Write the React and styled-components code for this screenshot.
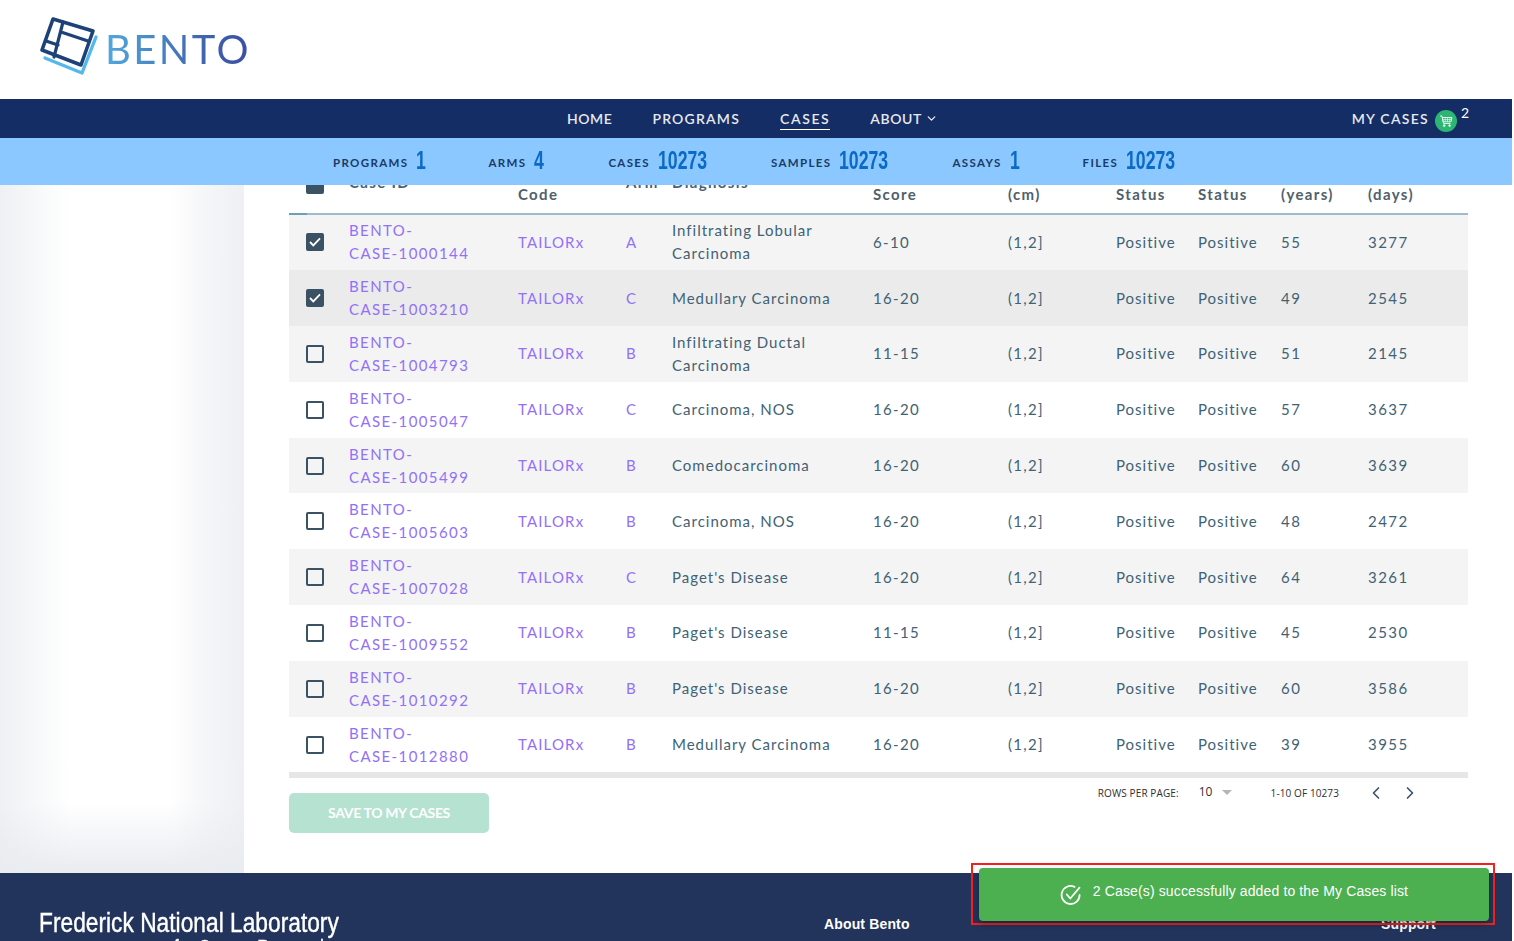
import React from 'react';
import styled, { createGlobalStyle } from 'styled-components';
import { ChevronDown, ChevronLeft, ChevronRight } from 'lucide-react';

const CASES = [
  ['1000144', 'A', 'Infiltrating Lobular Carcinoma', '6-10', '55', '3277', true],
  ['1003210', 'C', 'Medullary Carcinoma', '16-20', '49', '2545', true],
  ['1004793', 'B', 'Infiltrating Ductal Carcinoma', '11-15', '51', '2145', false],
  ['1005047', 'C', 'Carcinoma, NOS', '16-20', '57', '3637', false],
  ['1005499', 'B', 'Comedocarcinoma', '16-20', '60', '3639', false],
  ['1005603', 'B', 'Carcinoma, NOS', '16-20', '48', '2472', false],
  ['1007028', 'C', "Paget's Disease", '16-20', '64', '3261', false],
  ['1009552', 'B', "Paget's Disease", '11-15', '45', '2530', false],
  ['1010292', 'B', "Paget's Disease", '16-20', '60', '3586', false],
  ['1012880', 'B', 'Medullary Carcinoma', '16-20', '39', '3955', false],
];

const STATS = [
  ['PROGRAMS', '1', 8],
  ['ARMS', '4', 10],
  ['CASES', '10273', 49],
  ['SAMPLES', '10273', 49],
  ['ASSAYS', '1', 9],
  ['FILES', '10273', 49],
];

const COLUMNS = '60px 169px 108px 46px 201px 135px 108px 82px 83px 87px 100px';

const GlobalStyle = createGlobalStyle`
  html, body {
    margin: 0;
    height: 941px;
    overflow: hidden;
    background: #fff;
  }
  body {
    font-family: "Lato", "Liberation Sans", sans-serif;
  }
`;

const Page = styled.div`
  position: relative;
  width: 1512px;
  height: 941px;
  overflow: hidden;
`;

const Header = styled.header`
  height: 99px;
  box-sizing: border-box;
  display: flex;
  align-items: flex-start;
  padding: 15px 0 0 39px;
  gap: 6px;
  background: #fff;
`;

const Wordmark = styled.span`
  font-family: "Lato", sans-serif;
  font-weight: 400;
  font-size: 40px;
  letter-spacing: 2.4px;
  line-height: 1;
  margin-top: 14px;
  background: linear-gradient(90deg, #52a8dc 0%, #3f63ad 70%, #3b4ea3 100%);
  -webkit-background-clip: text;
  background-clip: text;
  color: transparent;
`;

const Nav = styled.nav`
  position: relative;
  z-index: 3;
  height: 39px;
  background: #142d64;
  display: flex;
  align-items: center;
  padding-left: 567px;
`;

const NavLink = styled.a`
  font-family: "Lato", sans-serif;
  font-size: 14px;
  font-weight: 600;
  letter-spacing: ${(p) => p.$spacing}px;
  color: #e6e9ef;
  margin-right: 40px;
  padding: 3px 0 2px;
  display: flex;
  align-items: center;
  gap: 3px;
  border-bottom: 1px solid ${(p) => (p.$active ? '#fff' : 'transparent')};
`;

const MyCases = styled.div`
  margin-left: auto;
  margin-right: 43px;
  display: flex;
  align-items: center;
  font-size: 14px;
  font-weight: 600;
  letter-spacing: 1.25px;
  color: #e6e9ef;
`;

const CartBadge = styled.span`
  width: 22px;
  height: 22px;
  border-radius: 50%;
  background: #2bb673;
  margin-left: 6px;
  display: flex;
  align-items: center;
  justify-content: center;
  position: relative;
  top: 2px;
`;

const CartCount = styled.sup`
  font-size: 14px;
  font-weight: 400;
  letter-spacing: 0;
  line-height: 1;
  margin-left: 4px;
  position: relative;
  top: -6px;
  color: #fff;
`;

const StatsBar = styled.div`
  position: relative;
  z-index: 2;
  height: 47px;
  box-sizing: border-box;
  padding: 0 0 3px 333px;
  background: #8bc8ff;
  display: flex;
  align-items: center;
  gap: 64px;
`;

const Stat = styled.div`
  display: flex;
  align-items: center;
`;

const StatLabel = styled.span`
  font-size: 11.5px;
  font-weight: 700;
  letter-spacing: 1.35px;
  color: #1c3a66;
  margin: 4px 8px 0 0;
`;

const StatValue = styled.span`
  display: inline-block;
  width: ${(p) => p.$width}px;
  font-family: "Liberation Sans", sans-serif;
  font-size: 26px;
  font-weight: 700;
  line-height: 30px;
  color: #0b69c7;
  transform: scaleX(0.68);
  transform-origin: left;
`;

const Body = styled.div`
  display: flex;
  height: 688px;
`;

const Sidebar = styled.aside`
  width: 244px;
  flex: none;
  background:
    linear-gradient(0deg, #e9ecf0 0, rgba(255, 255, 255, 0) 70px),
    linear-gradient(90deg, #eef0f3 0, #f9fafb 45px, #fff 70px, #fff 170px, #f5f6f8 205px, #eef0f3 100%);
`;

const Main = styled.main`
  flex: 1;
  padding-left: 45px;
  padding-right: 44px;
`;

const Table = styled.div`
  margin-top: -31.5px;
`;

const HeadRow = styled.div`
  position: relative;
  display: grid;
  grid-template-columns: ${COLUMNS};
  height: 61px;
  padding-bottom: 1px;
  align-items: center;
  border-bottom: 2px solid #9dbccb;
  box-sizing: border-box;

  &::after {
    content: "";
    position: absolute;
    left: 0;
    bottom: -2px;
    width: 18px;
    height: 2px;
    background: #6f9dbc;
  }
`;

const HeadCell = styled.div`
  font-size: 15px;
  font-weight: 700;
  letter-spacing: 1.35px;
  line-height: 23px;
  color: #4f606d;
`;

const Row = styled.div`
  display: grid;
  grid-template-columns: ${COLUMNS};
  height: 55.8px;
  align-items: center;
  background: ${(p) => p.$bg};
`;

const Cell = styled.div`
  font-size: 15px;
  letter-spacing: ${(p) => p.$spacing || 1}px;
  line-height: 23px;
  color: ${(p) => (p.$link ? '#9271f6' : '#3f6275')};
`;

const CheckCell = styled.div`
  display: flex;
  justify-content: center;
  padding-right: 8px;
  margin-top: ${(p) => (p.$head ? '4px' : '0')};
`;

const Check = styled.span`
  width: 18px;
  height: 18px;
  box-sizing: border-box;
  border-radius: 2px;
  border: 2px solid #3b5164;
  background: ${(p) => (p.$on ? '#3b5164' : 'transparent')};
  display: flex;
  align-items: center;
  justify-content: center;
`;

const TableEnd = styled.div`
  height: 5.5px;
  background: #e6e6e6;
`;

const Controls = styled.div`
  display: flex;
  justify-content: space-between;
  align-items: flex-start;
`;

const SaveButton = styled.button`
  margin-top: 15px;
  width: 200px;
  height: 40px;
  border: 0;
  border-radius: 5px;
  background: #b5e2d1;
  color: #fff;
  font-family: "Lato", sans-serif;
  font-size: 14px;
  font-weight: 700;
  letter-spacing: -0.35px;
`;

const Pager = styled.div`
  display: flex;
  align-items: center;
  height: 28px;
  margin-top: 1px;
  padding-right: 48px;
  font-family: "Open Sans", sans-serif;
  letter-spacing: 0.1px;
  color: #2f2f2f;
  font-size: 10px;
`;

const PagerCount = styled.span`
  margin-left: ${(p) => p.$gap}px;
`;

const PagerValue = styled.span`
  font-size: 12px;
  margin-left: 20px;
  position: relative;
  top: -1px;
`;

const Caret = styled.span`
  width: 0;
  height: 0;
  margin-left: 9px;
  border-left: 5px solid transparent;
  border-right: 5px solid transparent;
  border-top: 5px solid #b5b5b5;
`;

const PagerIcon = styled.span`
  display: flex;
  color: #3c5364;
  margin-left: ${(p) => p.$gap}px;
`;

const Footer = styled.footer`
  height: 68px;
  background: #22345c;
  padding: 36px 0 0 39px;
  display: flex;
  box-sizing: border-box;
  color: #fff;
`;

const FooterBrand = styled.div`
  width: 785px;
  flex: none;
  font-family: "Liberation Sans", sans-serif;
  font-size: 27px;
  line-height: 28px;
  -webkit-text-stroke: 0.4px #fff;
  transform: scaleX(0.843);
  transform-origin: left top;
  white-space: nowrap;
`;

const BrandSub = styled.div`
  padding-left: 160px;
  font-size: 20px;
  line-height: 20px;
`;

const FooterHead = styled.div`
  font-family: "Liberation Sans", sans-serif;
  font-size: 14px;
  font-weight: 700;
  letter-spacing: 0.15px;
  padding-top: 7px;
  width: ${(p) => p.$width}px;
  flex: none;
`;

const Toast = styled.div`
  position: absolute;
  left: 979px;
  top: 868px;
  width: 510px;
  height: 53px;
  background: #4caf50;
  border-radius: 4px;
  box-shadow: 0 3px 6px rgba(0, 0, 0, 0.3);
  display: flex;
  align-items: center;
  justify-content: center;
  gap: 11px;
  color: #fff;
  font-family: "Liberation Sans", sans-serif;
  font-size: 14px;
  letter-spacing: 0.13px;
  box-sizing: border-box;
`;

const ToastText = styled.span`
  margin-bottom: 8px;
`;

const Annotation = styled.div`
  position: absolute;
  left: 971px;
  top: 863px;
  width: 524px;
  height: 62px;
  box-sizing: border-box;
  border: 2px solid #f3211b;
`;

const BentoLogo = () => (
  <svg width="60" height="62" viewBox="0 0 60 62" fill="none" strokeLinejoin="round" strokeLinecap="round">
    <path d="M6 43 L43 58 L57 22" stroke="#54b9ea" strokeWidth="3.4" />
    <path d="M14 4 L54 16 L42 50 L3 35 Z" stroke="#1d4277" strokeWidth="3.6" />
    <path d="M24 7 L15 42 M22 17 L49 26 M7 26 L19 30" stroke="#1d4277" strokeWidth="3.2" />
  </svg>
);

const CartIcon = () => (
  <svg width="14" height="14" viewBox="0 0 14 14" fill="none" stroke="#dff5ea" strokeWidth="1">
    <path d="M1 2 L3 2 L4.5 9.5 L11.5 9.5" />
    <path d="M3.2 3.5 L13 3.5 L12 7.8 L4.2 7.8 Z" />
    <path d="M6 3.5 L6.4 7.8 M8.5 3.5 L8.5 7.8 M11 3.5 L10.6 7.8 M3.7 5.6 L12.5 5.6" strokeWidth="0.7" />
    <circle cx="5.2" cy="11.6" r="0.9" fill="#dff5ea" />
    <circle cx="10.6" cy="11.6" r="0.9" fill="#dff5ea" />
  </svg>
);

const CheckMark = () => (
  <svg width="12" height="10" viewBox="0 0 12 10" fill="none">
    <path d="M1 5 L4.3 8.4 L11 1.4" stroke="#fff" strokeWidth="1.8" />
  </svg>
);

const ToastIcon = () => (
  <svg width="22" height="22" viewBox="0 0 22 22" fill="none" stroke="#fff" strokeWidth="1.8" strokeLinecap="round" strokeLinejoin="round">
    <path d="M19.6 11 A9 9 0 1 1 14.5 2.9" />
    <path d="M6.8 10.5 L10.3 14.5 L19.5 3.6" />
  </svg>
);

const HEADS = [
  'Case ID',
  <>Program<br />Code</>,
  'Arm',
  'Diagnosis',
  <>Recurrence<br />Score</>,
  <>Tumor Size<br />(cm)</>,
  <>ER<br />Status</>,
  <>PR<br />Status</>,
  <>Age<br />(years)</>,
  <>Survival<br />(days)</>,
];

const rowColor = (index) => {
  if (index === 1) return '#ebebeb';
  return index % 2 === 0 ? '#f4f4f4' : '#fff';
};

const App = () => (
  <Page>
    <GlobalStyle />
    <Header>
      <BentoLogo />
      <Wordmark>BENTO</Wordmark>
    </Header>
    <Nav>
      <NavLink $spacing={0.55}>HOME</NavLink>
      <NavLink $spacing={1.2}>PROGRAMS</NavLink>
      <NavLink $spacing={1.6} $active>CASES</NavLink>
      <NavLink $spacing={0.6}>ABOUT <ChevronDown size={13} strokeWidth={2.5} /></NavLink>
      <MyCases>
        MY CASES
        <CartBadge><CartIcon /></CartBadge>
        <CartCount>2</CartCount>
      </MyCases>
    </Nav>
    <StatsBar>
      {STATS.map(([label, value, width]) => (
        <Stat key={label}>
          <StatLabel>{label}</StatLabel>
          <StatValue $width={width}>{value}</StatValue>
        </Stat>
      ))}
    </StatsBar>
    <Body>
      <Sidebar />
      <Main>
        <Table>
          <HeadRow>
            <CheckCell $head><Check $on /></CheckCell>
            {HEADS.map((head, index) => (
              <HeadCell key={index}>{head}</HeadCell>
            ))}
          </HeadRow>
          {CASES.map(([id, arm, diagnosis, score, age, days, checked], index) => (
            <Row key={id} $bg={rowColor(index)}>
              <CheckCell><Check $on={checked}>{checked && <CheckMark />}</Check></CheckCell>
              <Cell $link $spacing={1.4}>BENTO-<br />CASE-{id}</Cell>
              <Cell $link $spacing={1.15}>TAILORx</Cell>
              <Cell $link>{arm}</Cell>
              <Cell>{diagnosis}</Cell>
              <Cell $spacing={1.35}>{score}</Cell>
              <Cell $spacing={1.3}>(1,2]</Cell>
              <Cell>Positive</Cell>
              <Cell>Positive</Cell>
              <Cell $spacing={1.45}>{age}</Cell>
              <Cell $spacing={1.45}>{days}</Cell>
            </Row>
          ))}
          <TableEnd />
        </Table>
        <Controls>
          <SaveButton>SAVE TO MY CASES</SaveButton>
          <Pager>
            ROWS PER PAGE:
            <PagerValue>10</PagerValue>
            <Caret />
            <PagerCount $gap={39}>1-10 OF 10273</PagerCount>
            <PagerIcon $gap={27}><ChevronLeft size={20} /></PagerIcon>
            <PagerIcon $gap={14}><ChevronRight size={20} /></PagerIcon>
          </Pager>
        </Controls>
      </Main>
    </Body>
    <Footer>
      <FooterBrand>
        Frederick National Laboratory
        <BrandSub>for Cancer Research</BrandSub>
      </FooterBrand>
      <FooterHead $width={557}>About Bento</FooterHead>
      <FooterHead $width={100}>Support</FooterHead>
    </Footer>
    <Annotation />
    <Toast>
      <ToastIcon />
      <ToastText>2 Case(s) successfully added to the My Cases list</ToastText>
    </Toast>
  </Page>
);

export default App;
